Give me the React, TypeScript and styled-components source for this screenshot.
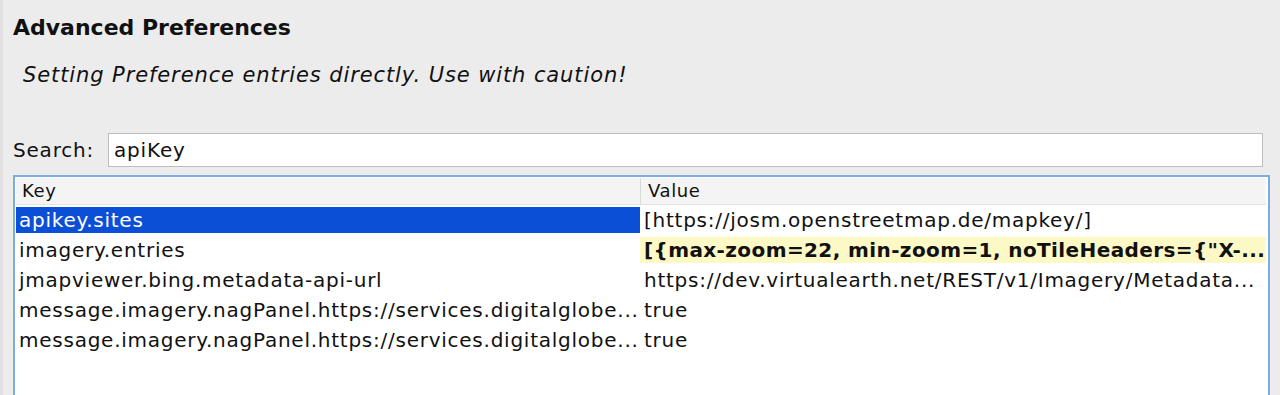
import React from "react";
import styled, { createGlobalStyle } from "styled-components";

const Global = createGlobalStyle`
  html, body { margin: 0; padding: 0; background: #ececec; }
  body { font-family: "DejaVu Sans", "Liberation Sans", sans-serif; color: #111; }
  #root { width: 1280px; height: 395px; overflow: hidden; }
`;

const Page = styled.div`
  box-sizing: border-box;
  width: 1280px;
  height: 395px;
  background: #ececec;
  border-left: 3px solid #e0e0e0;
  padding: 15px 10px 0 10px;
  display: flex;
  flex-direction: column;
`;

const Title = styled.h1`
  margin: 0;
  font-size: 22px;
  font-weight: bold;
  line-height: 26px;
  color: #111;
`;

const Note = styled.p`
  margin: 21px 0 0 10px;
  font-size: 21px;
  letter-spacing: 0.9px;
  font-style: italic;
  line-height: 26px;
  color: #111;
`;

const SearchRow = styled.div`
  display: flex;
  align-items: center;
  gap: 14px;
  margin-top: 45px;
`;

const Label = styled.label`
  font-size: 20px;
  letter-spacing: 0.8px;
  line-height: 26px;
`;

const Input = styled.div`
  flex: 1;
  height: 34px;
  box-sizing: border-box;
  margin-right: 7px;
  background: #fff;
  border: 1px solid #bdbdbd;
  display: flex;
  align-items: center;
  padding-left: 5px;
  font-size: 20px;
  letter-spacing: 0.8px;
`;

const Table = styled.div`
  margin-top: 8px;
  flex: 1;
  background: #fff;
  border: 2px solid #7aaee0;
  border-bottom: none;
  padding: 1px 2px 0 1px;
`;

const Row = styled.div<{ $head?: boolean }>`
  display: grid;
  grid-template-columns: 624px 1fr;
  height: ${(p) => (p.$head ? "26px" : "30px")};
  margin-bottom: ${(p) => (p.$head ? "1px" : "0")};
  font-size: 20px;
  letter-spacing: 0.75px;
  line-height: 26px;
`;

const HeadCell = styled.div<{ $first?: boolean }>`
  background: #f4f4f4;
  border-bottom: 1px solid #e4e4e4;
  padding-left: ${(p) => (p.$first ? "6px" : "7px")};
  border-left: ${(p) => (p.$first ? "none" : "1px solid #d8d8d8")};
  font-size: 18px;
  letter-spacing: 0.6px;
  color: #111;
`;

const Cell = styled.div<{ $sel?: boolean; $hl?: boolean; $bold?: boolean; $first?: boolean }>`
  white-space: nowrap;
  overflow: hidden;
  margin: 2px 0;
  padding-left: ${(p) => (p.$first ? "3px" : "4px")};
  background: ${(p) => (p.$sel ? "#0b4fd6" : p.$hl ? "#fcf9c6" : "transparent")};
  color: ${(p) => (p.$sel ? "#fff" : "#111")};
  font-weight: ${(p) => (p.$bold ? "bold" : "normal")};
  letter-spacing: ${(p) => (p.$bold ? "0.4px" : "0.75px")};
`;

const rows = [
  { k: "apikey.sites", v: "[https://josm.openstreetmap.de/mapkey/]", sel: true },
  { k: "imagery.entries", v: '[{max-zoom=22, min-zoom=1, noTileHeaders={"X-...', hl: true },
  { k: "jmapviewer.bing.metadata-api-url", v: "https://dev.virtualearth.net/REST/v1/Imagery/Metadata..." },
  { k: "message.imagery.nagPanel.https://services.digitalglobe...", v: "true" },
  { k: "message.imagery.nagPanel.https://services.digitalglobe...", v: "true" },
];

export default function App() {
  return (
    <>
      <Global />
      <Page>
        <Title>Advanced Preferences</Title>
        <Note>Setting Preference entries directly. Use with caution!</Note>
        <SearchRow>
          <Label>Search:</Label>
          <Input>apiKey</Input>
        </SearchRow>
        <Table>
          <Row $head>
            <HeadCell $first>Key</HeadCell>
            <HeadCell>Value</HeadCell>
          </Row>
          {rows.map((r, i) => (
            <Row key={i}>
              <Cell $first $sel={r.sel}>{r.k}</Cell>
              <Cell $hl={r.hl} $bold={r.hl}>{r.v}</Cell>
            </Row>
          ))}
        </Table>
      </Page>
    </>
  );
}
